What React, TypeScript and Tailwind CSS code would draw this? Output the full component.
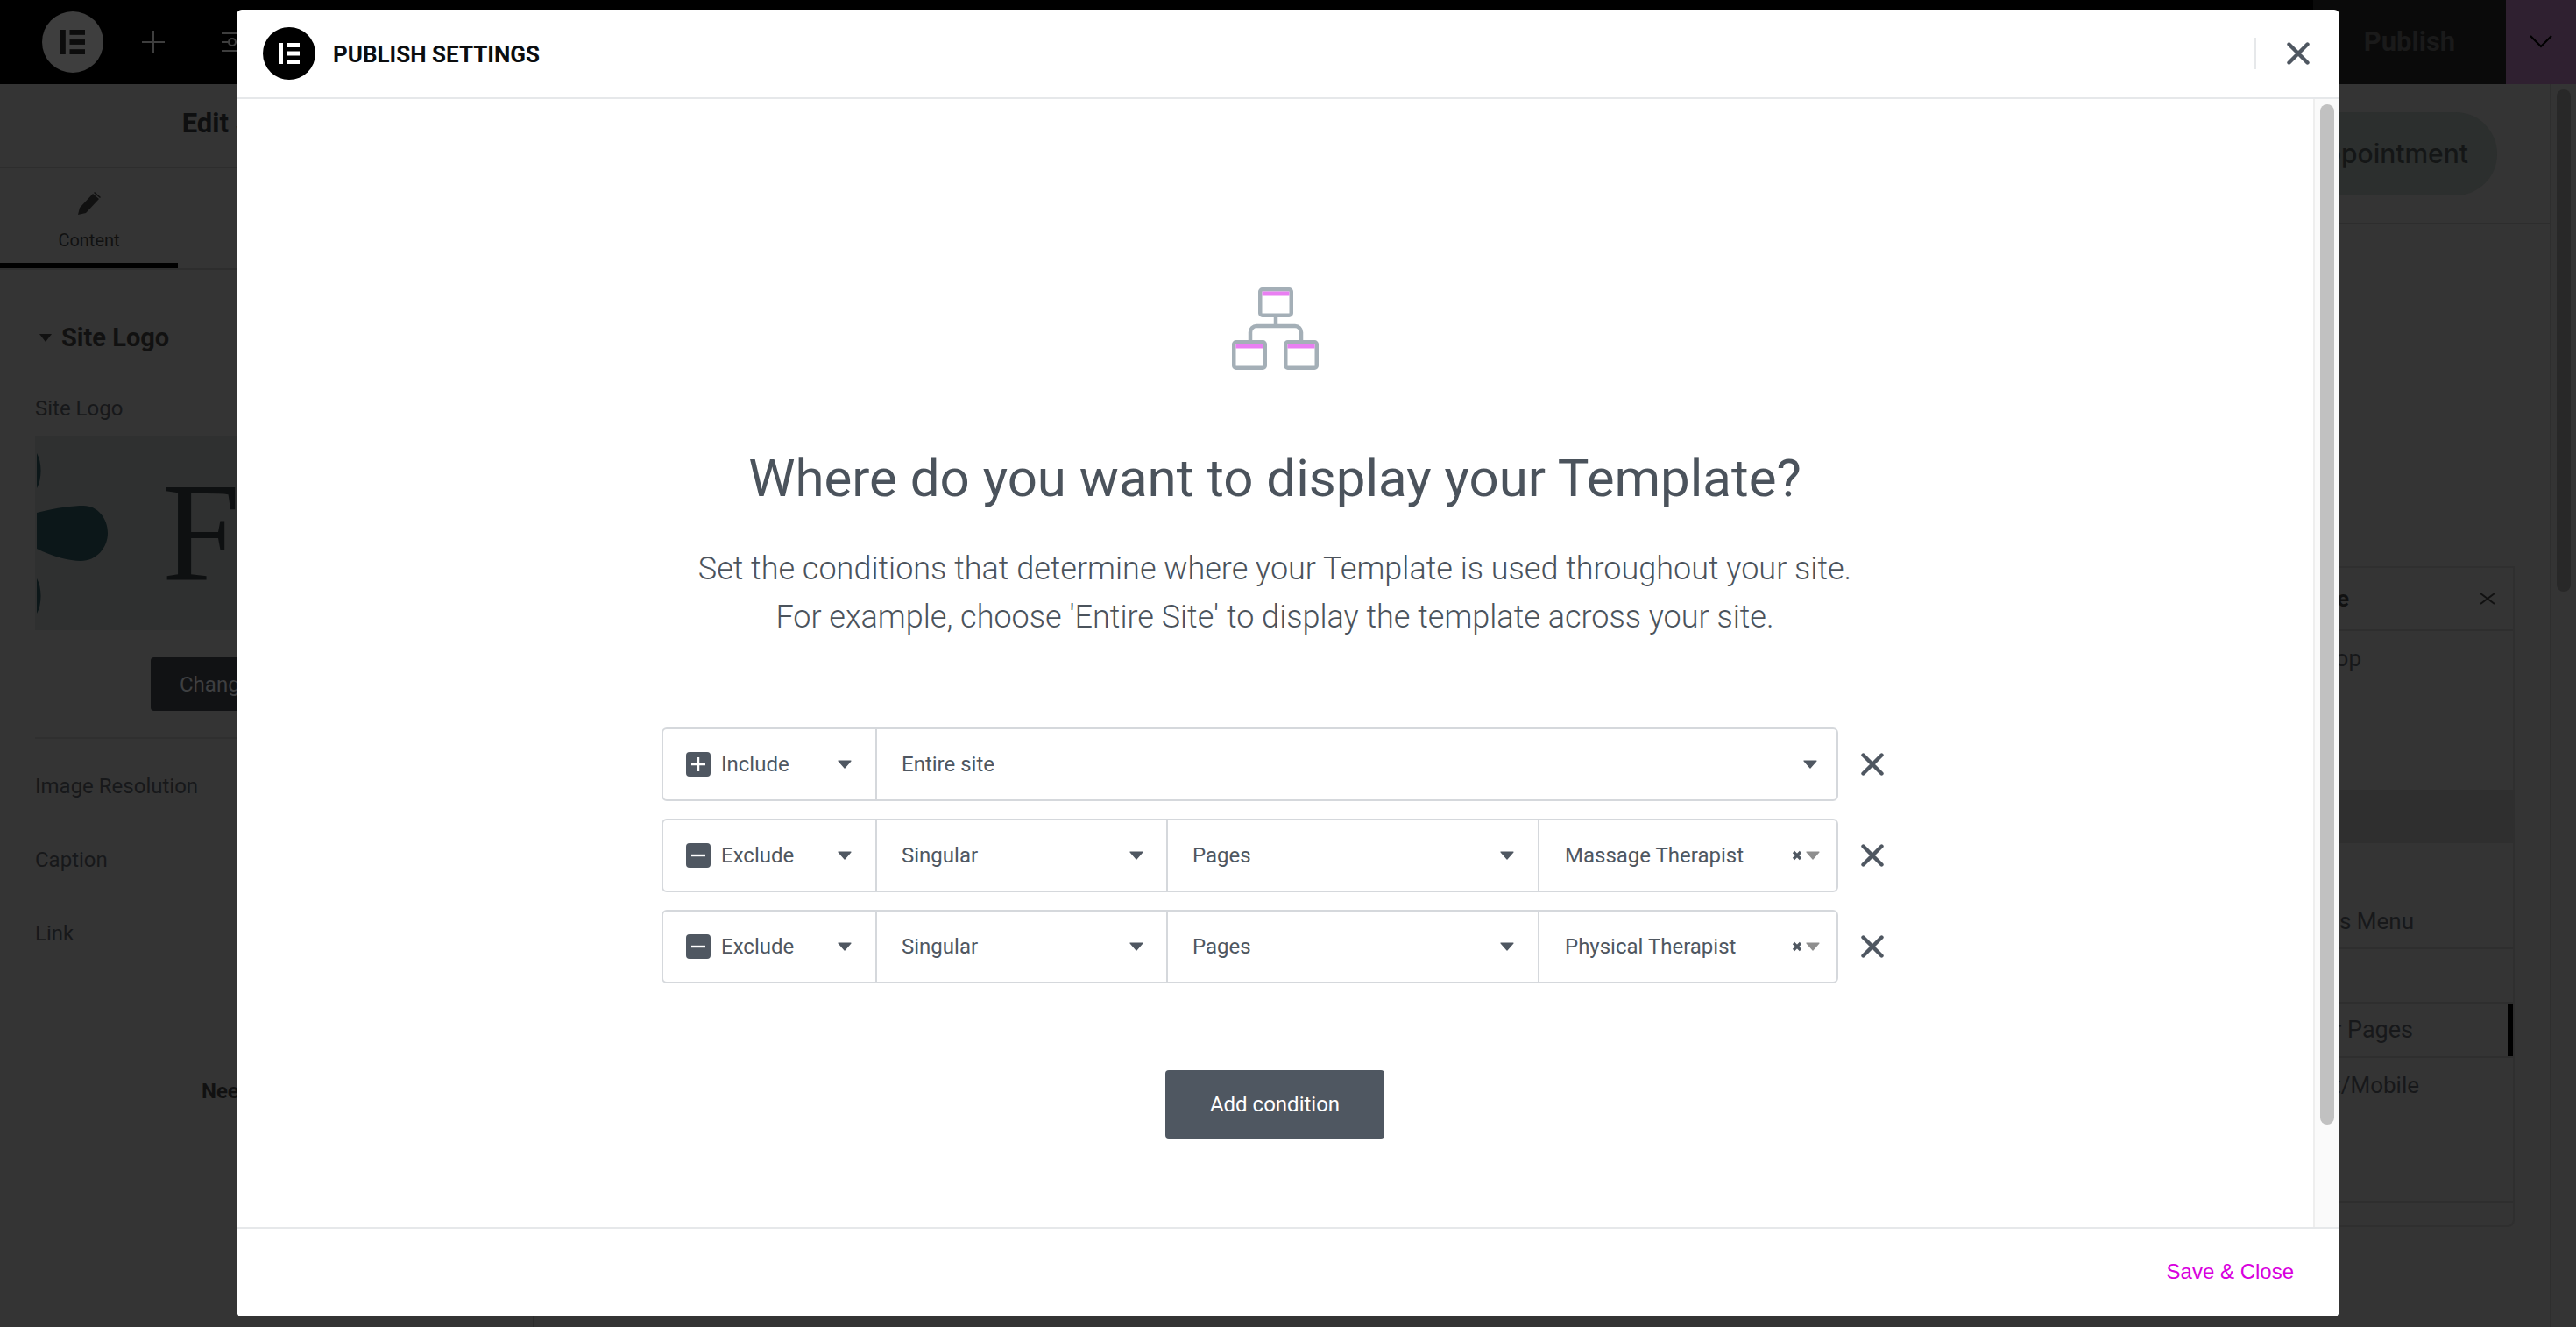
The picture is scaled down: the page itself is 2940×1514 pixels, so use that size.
import React from "react";

const ROBOTO = "font-['Roboto',sans-serif]";

// the "IE" mark, used in both the dimmed bar and the modal header
const ElementorMark = ({ size, bg, fg }: { size: number; bg: string; fg: string }) => (
  <svg width={size} height={size} viewBox="0 0 60 60" className="shrink-0">
    <circle cx="30" cy="30" r="30" fill={bg} />
    <rect x="18" y="18" width="5" height="24" fill={fg} />
    <rect x="27" y="18" width="15" height="5" fill={fg} />
    <rect x="27" y="27.5" width="15" height="5" fill={fg} />
    <rect x="27" y="37" width="15" height="5" fill={fg} />
  </svg>
);

const Caret = ({ color = "#4f5761" }: { color?: string }) => (
  <svg width="16" height="10" viewBox="0 0 16 10" className="shrink-0">
    <path d="M1 1h14L8 9z" fill={color} stroke={color} strokeWidth="1.2" strokeLinejoin="round" />
  </svg>
);

const CrossIcon = ({ size = 26, stroke = 4.4 }: { size?: number; stroke?: number }) => (
  <svg width={size} height={size} viewBox="0 0 26 26" className="shrink-0">
    <path d="M2.5 2.5l21 21M23.5 2.5l-21 21" stroke="#4f5761" strokeWidth={stroke} strokeLinecap="round" />
  </svg>
);

const TemplateBox = ({ x, y }: { x: number; y: number }) => (
  <g>
    <rect x={x + 2.25} y={y + 2.25} width="35.5" height="29.5" rx="2.5" fill="#fff" stroke="#a4afb7" strokeWidth="4.5" />
    <rect x={x + 4.5} y={y + 4.5} width="31" height="5" fill="#e97ff2" />
  </g>
);

const ConditionsIcon = () => (
  <svg width="100" height="94" viewBox="0 0 100 94" className="ml-[2px] shrink-0">
    <path d="M50 34v10M21 60v-9a7 7 0 0 1 7-7h44a7 7 0 0 1 7 7v9" fill="none" stroke="#a4afb7" strokeWidth="4.5" />
    <TemplateBox x={30} y={0} />
    <TemplateBox x={0} y={60} />
    <TemplateBox x={59} y={60} />
  </svg>
);

const TypeBadge = ({ type }: { type: "Include" | "Exclude" }) => (
  <span className="flex items-center gap-3">
    <span className="flex h-[28px] w-[28px] items-center justify-center rounded-[4px] bg-[#4f5761]">
      <svg width="16" height="16" viewBox="0 0 16 16">
        <path d={type === "Include" ? "M8 0v16M0 8h16" : "M0 8h16"} stroke="#fff" strokeWidth="2.4" />
      </svg>
    </span>
    {type}
  </span>
);

const Cell = ({ className, children }: { className: string; children: React.ReactNode }) => (
  <div className={`flex items-center justify-between ${className}`}>{children}</div>
);

const ConditionRow = ({ type, page }: { type: "Include" | "Exclude"; page?: string }) => (
  <div className="flex items-center justify-between">
    <div className="flex h-[84px] w-[1343px] rounded-[6px] border-2 border-[#d5d8dc] text-[24px] text-[#4f5761]">
      <Cell className="w-[242px] pl-[26px] pr-[27px]">
        <TypeBadge type={type} />
        <Caret />
      </Cell>
      {page ? (
        <>
          <Cell className="w-[332px] border-l-2 border-[#d5d8dc] pl-[28px] pr-[26px]">
            Singular
            <Caret />
          </Cell>
          <Cell className="w-[424px] border-l-2 border-[#d5d8dc] pl-[28px] pr-[27px]">
            Pages
            <Caret />
          </Cell>
          <Cell className="flex-1 border-l-2 border-[#d5d8dc] pl-[29px] pr-[19px]">
            {page}
            <span className="flex items-center gap-[4px]">
              <svg width="12" height="12" viewBox="0 0 12 12">
                <path d="M2 2l8 8M10 2l-8 8" stroke="#4f5761" strokeWidth="3.2" />
              </svg>
              <Caret color="#8f8f8f" />
            </span>
          </Cell>
        </>
      ) : (
        <Cell className="flex-1 border-l-2 border-[#d5d8dc] pl-[28px] pr-[22px]">
          Entire site
          <Caret />
        </Cell>
      )}
    </div>
    <span className="mr-[5px]">
      <CrossIcon />
    </span>
  </div>
);

const PublishModal = () => (
  <div className={`absolute left-[270px] top-[11px] flex h-[1491px] w-[2400px] flex-col overflow-hidden rounded-[6px] bg-white ${ROBOTO}`}>
    <header className="flex h-[102px] shrink-0 items-center border-b-2 border-[#e6e8ea] pl-[30px] pr-[34px]">
      <ElementorMark size={60} bg="#000" fg="#fff" />
      <h2 className="ml-[20px] mt-[2px] text-[26px] font-bold text-[#0c0d0e]">PUBLISH SETTINGS</h2>
      <span className="ml-auto h-[36px] w-[2px] bg-[#e6e8ea]" />
      <span className="ml-[35px]">
        <CrossIcon />
      </span>
    </header>

    <div className="flex min-h-0 flex-1">
      <main className="flex flex-1 flex-col items-center pt-[215px] text-[#4b535c]">
        <ConditionsIcon />
        <h1 className="mt-[88px] text-[60px] leading-[72px]">Where do you want to display your Template?</h1>
        <p className="mt-[40px] text-center text-[36px] font-light leading-[55px]">
          Set the conditions that determine where your Template is used throughout your site.
          <br />
          For example, choose 'Entire Site' to display the template across your site.
        </p>
        <div className="mt-[98px] flex w-[1400px] flex-col gap-[20px]">
          <ConditionRow type="Include" />
          <ConditionRow type="Exclude" page="Massage Therapist" />
          <ConditionRow type="Exclude" page="Physical Therapist" />
        </div>
        <button className="mt-[99px] h-[78px] w-[250px] rounded-[4px] bg-[#4f5761] text-[24px] text-white">
          Add condition
        </button>
      </main>
      <div className="w-[30px] shrink-0 border-l-2 border-[#eeeeee] bg-[#fafafa] pl-[6px] pt-[6px]">
        <div className="h-[1164px] w-[16px] rounded-full bg-[#c1c1c1]" />
      </div>
    </div>

    <footer className="flex h-[102px] shrink-0 items-center justify-end border-t-2 border-[#e6e8ea] pb-[2px] pr-[52px]">
      <span className="font-['Liberation_Sans',sans-serif] text-[24px] text-[#d800de]">Save &amp; Close</span>
    </footer>
  </div>
);

const ControlLabel = ({ children }: { children: React.ReactNode }) => (
  <div className="flex h-[84px] items-center text-[24px] text-[#17181a]">{children}</div>
);

const LeftPanel = () => (
  <aside className="w-[610px] shrink-0 border-r-2 border-[#2c2c2c] bg-[#343434]">
    <div className="flex h-[96px] items-center justify-center border-b-2 border-[#2d2d2d] pb-[3px] text-[31px] font-bold text-[#0e0f10]">
      Edit Site Logo
    </div>
    <div className="flex h-[116px] border-b-2 border-[#2d2d2d]">
      <div className="flex w-[203px] flex-col items-center justify-end border-b-[6px] border-black pb-[11px] text-[20px] text-[#111]">
        <svg width="28" height="28" viewBox="0 0 28 28" className="mb-[13px]">
          <path d="M1 27l2-8L18 3l7 6L10 25zM20 1l7 6-1 1-7-6z" fill="#111" />
        </svg>
        Content
      </div>
    </div>
    <div className="px-[40px]">
      <div className="ml-[5px] mt-[63px] flex items-center gap-[11px] text-[29px] font-bold leading-none text-[#111]">
        <svg width="14" height="9" viewBox="0 0 14 9">
          <path d="M0 0h14L7 9z" fill="#111" />
        </svg>
        Site Logo
      </div>
      <div className="mt-[51px] text-[24px] leading-[30px] text-[#17181a]">Site Logo</div>
      <div className="relative mt-[16px] flex h-[222px] items-center overflow-hidden bg-[#2f3030] pl-[145px]">
        <svg width="90" height="222" viewBox="0 0 90 222" className="absolute left-0 top-0">
          <path d="M2 20C8 30 8 50 2 60zM2 88C25 82 45 80 55 80C72 80 83 95 83 111C83 128 70 143 52 143C40 143 20 138 2 129zM2 163C8 173 8 193 2 203z" fill="#0c1719" />
        </svg>
        <span className="font-['Liberation_Serif',serif] text-[160px] leading-none text-[#0e1011]">F</span>
      </div>
      <div className="ml-[132px] mt-[31px]">
        <span className="flex h-[61px] w-[264px] items-center rounded-[4px] bg-[#111214] pl-[33px] text-[24px] text-[#3e3f41]">
          Change Image
        </span>
      </div>
      <div className="mt-[30px] border-t-2 border-[#2f2f2f] pt-[12px]">
        <ControlLabel>Image Resolution</ControlLabel>
        <ControlLabel>Caption</ControlLabel>
        <ControlLabel>Link</ControlLabel>
      </div>
      <div className="mt-[120px] flex items-center justify-center gap-[12px] text-[24px] font-bold text-[#111]">
        Need Help
        <svg width="24" height="24" viewBox="0 0 24 24">
          <circle cx="12" cy="12" r="11" fill="#111" />
        </svg>
      </div>
    </div>
  </aside>
);

const StructurePanel = () => {
  const rowCls = "flex h-[62px] items-center justify-end border-b-2 border-[#2e2e2e] text-[26px] text-[#17181a]";
  return (
    <section className="absolute right-[70px] top-[646px] flex h-[754px] w-[320px] flex-col rounded-br-[8px] border-2 border-[#2f2f2f]">
      <div className="flex h-[72px] items-center border-b-2 border-[#2e2e2e] pr-[20px] text-[26px] font-bold text-[#111]">
        <span className="pl-[20px]">Structure</span>
        <svg width="18" height="14" viewBox="0 0 18 14" className="ml-auto">
          <path d="M1 1l16 12M17 1L1 13" stroke="#111" strokeWidth="2" />
        </svg>
      </div>
      <div className="flex h-[62px] items-center justify-end pr-[173px] text-[26px] text-[#17181a]">Desktop</div>
      <div className="h-[119px]" />
      <div className="h-[61px] bg-[#2f2f2f]" />
      <div className="h-[59px]" />
      <div className={`${rowCls} pr-[113px]`}>Tablet's Menu</div>
      <div className="h-[62px] border-b-2 border-[#2e2e2e]" />
      <div className={`${rowCls} relative pr-[114px] text-[27px]`}>
        Header Pages
        <span className="absolute right-0 top-0 h-full w-[6px] bg-black" />
      </div>
      <div className="flex h-[62px] items-center justify-end pr-[107px] text-[26px] text-[#17181a]">Tablet/Mobile</div>
      <div className="flex-1 border-b-2 border-[#2e2e2e]" />
      <div className="h-[26px]" />
    </section>
  );
};

export default function App() {
  return (
    <div className={`relative flex h-[1514px] w-[2940px] flex-col overflow-hidden bg-[#343434] ${ROBOTO}`}>
      {/* dimmed editor behind the modal */}
      <div className="flex h-[96px] shrink-0 items-center bg-black">
        <span className="ml-[48px]">
          <ElementorMark size={70} bg="#3e3e3e" fg="#0c0c0c" />
        </span>
        <svg width="26" height="26" viewBox="0 0 26 26" className="ml-[44px]">
          <path d="M13 0v26M0 13h26" stroke="#3e3e3e" strokeWidth="2" />
        </svg>
        <svg width="30" height="30" viewBox="0 0 30 30" className="ml-[65px]">
          <path d="M0 5h30M0 15h30M0 25h30" stroke="#3e3e3e" strokeWidth="2" />
          <circle cx="12" cy="15" r="4" fill="#000" stroke="#3e3e3e" strokeWidth="2" />
        </svg>
        <div className="ml-auto flex h-full w-[220px] items-center justify-center bg-[#0a0a0a] font-bold">
          <span className="text-[31px] text-[#1a1a1a]">Publish</span>
        </div>
        <div className="flex h-full w-[80px] items-center justify-center bg-[#2f2030]">
          <svg width="26" height="15" viewBox="0 0 26 15" className="mb-[2px]">
            <path d="M1 1l12 12L25 1" fill="none" stroke="#000" strokeWidth="2.2" />
          </svg>
        </div>
      </div>

      <div className="flex min-h-0 flex-1">
        <LeftPanel />
        <div className="flex-1">
          <div className="flex h-[160px] items-center justify-end border-b-2 border-[#2d2d2d]">
            <span className="flex h-[95px] w-[420px] items-center justify-end rounded-full bg-[#2c2f2e] pr-[33px] font-['Inter',sans-serif] text-[30px] font-medium text-[#141616]">
              Book Appointment
            </span>
            <span className="w-[60px]" />
          </div>
        </div>
        <div className="w-[30px] shrink-0 border-l-2 border-[#2e2e2e] pl-[6px] pt-[6px]">
          <div className="h-[573px] w-[16px] rounded-full bg-[#282828]" />
        </div>
      </div>

      <StructurePanel />
      <PublishModal />
    </div>
  );
}
